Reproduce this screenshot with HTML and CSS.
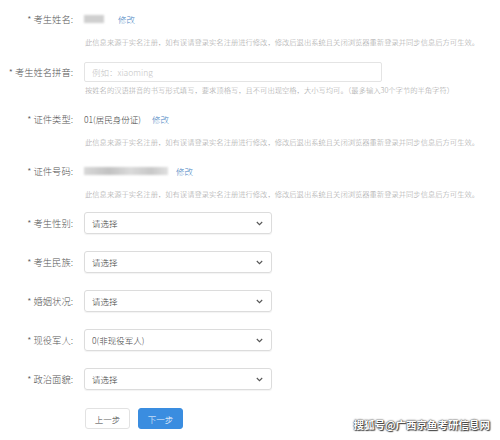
FILE: index.html
```html
<!DOCTYPE html>
<html lang="zh-CN">
<head>
<meta charset="utf-8">
<title>考生信息</title>
<link rel="stylesheet" href="styles.css">
</head>
<body>
<div class="page">
  <form class="form">
    <div class="row r1">
      <div class="label">* 考生姓名:</div>
      <div class="field"><span class="blur blur-name"></span><a class="link">修改</a></div>
    </div>
    <div class="help h1">此信息来源于实名注册，如有误请登录实名注册进行修改，修改后退出系统且关闭浏览器重新登录并同步信息后方可生效。</div>

    <div class="row r2">
      <div class="label">* 考生姓名拼音:</div>
      <div class="field"><div class="input">例如：xiaoming</div></div>
    </div>
    <div class="help h2">按姓名的汉语拼音的书写形式填写，要求顶格写，且不可出现空格，大小写均可。（最多输入30个字节的半角字符）</div>

    <div class="row r3">
      <div class="label">* 证件类型:</div>
      <div class="field"><span class="value">01(居民身份证)</span><a class="link">修改</a></div>
    </div>
    <div class="help h1">此信息来源于实名注册，如有误请登录实名注册进行修改，修改后退出系统且关闭浏览器重新登录并同步信息后方可生效。</div>

    <div class="row r3">
      <div class="label">* 证件号码:</div>
      <div class="field"><span class="blur blur-id"></span><a class="link">修改</a></div>
    </div>
    <div class="help h1">此信息来源于实名注册，如有误请登录实名注册进行修改，修改后退出系统且关闭浏览器重新登录并同步信息后方可生效。</div>

    <div class="row sel first">
      <div class="label">* 考生性别:</div>
      <div class="field"><div class="select"><span>请选择</span><svg width="7" height="5" viewBox="0 0 7 5"><path d="M0.8 1 L3.5 3.7 L6.2 1" fill="none" stroke="#555" stroke-width="1.1"/></svg></div></div>
    </div>
    <div class="row sel">
      <div class="label">* 考生民族:</div>
      <div class="field"><div class="select"><span>请选择</span><svg width="7" height="5" viewBox="0 0 7 5"><path d="M0.8 1 L3.5 3.7 L6.2 1" fill="none" stroke="#555" stroke-width="1.1"/></svg></div></div>
    </div>
    <div class="row sel">
      <div class="label">* 婚姻状况:</div>
      <div class="field"><div class="select"><span>请选择</span><svg width="7" height="5" viewBox="0 0 7 5"><path d="M0.8 1 L3.5 3.7 L6.2 1" fill="none" stroke="#555" stroke-width="1.1"/></svg></div></div>
    </div>
    <div class="row sel">
      <div class="label">* 现役军人:</div>
      <div class="field"><div class="select"><span>0(非现役军人)</span><svg width="7" height="5" viewBox="0 0 7 5"><path d="M0.8 1 L3.5 3.7 L6.2 1" fill="none" stroke="#555" stroke-width="1.1"/></svg></div></div>
    </div>
    <div class="row sel">
      <div class="label">* 政治面貌:</div>
      <div class="field"><div class="select"><span>请选择</span><svg width="7" height="5" viewBox="0 0 7 5"><path d="M0.8 1 L3.5 3.7 L6.2 1" fill="none" stroke="#555" stroke-width="1.1"/></svg></div></div>
    </div>

    <div class="row actions">
      <div class="label"></div>
      <div class="field buttons">
        <button type="button" class="btn btn-default">上一步</button>
        <button type="button" class="btn btn-primary">下一步</button>
      </div>
    </div>
  </form>
  <div class="watermark">搜狐号@广西京鱼考研信息网</div>
</div>
</body>
</html>
```

FILE: styles.css
```css
html, body {
  margin: 0;
  padding: 0;
  background: #ffffff;
}

body {
  font-family: "Noto Sans CJK SC", "Noto Sans", "Liberation Sans", sans-serif;
  color: #555;
}

.page {
  position: relative;
  width: 500px;
  height: 440px;
  overflow: hidden;
}

.form {
  padding-top: 9px;
}

.row {
  display: grid;
  grid-template-columns: 84px 1fr;
  align-items: center;
}

.label {
  text-align: right;
  padding-right: 11px;
  font-size: 9.3px;
  font-weight: 300;
  color: #555;
  white-space: nowrap;
}

.field {
  display: flex;
  align-items: center;
  font-size: 8.5px;
  font-weight: 300;
  color: #444;
}

.r1, .r3 {
  height: 20px;
}

.r2 {
  height: 20px;
  margin-top: 14px;
}

.r3 {
  margin-top: 13px;
}

.help {
  margin-left: 85px;
  font-size: 7.3px;
  font-weight: 300;
  line-height: 12px;
  color: #a3a3a3;
  white-space: nowrap;
}

.help.h1 {
  margin-top: 7px;
}

.help.h2 {
  margin-top: 2px;
}

.link {
  color: #3f7fbf;
  text-decoration: none;
  font-size: 8.5px;
}

.blur {
  display: inline-block;
  height: 8px;
  background: #cfcfcf;
  filter: blur(1.2px);
}

.blur-name {
  width: 20px;
  margin-right: 14px;
}

.blur-id {
  width: 84px;
  margin-right: 8px;
  background: linear-gradient(90deg, #d8d8d8 0%, #c2c2c2 30%, #dadada 55%, #c8c8c8 80%, #e0e0e0 100%);
}

.value {
  margin-right: 11px;
}

.input {
  box-sizing: border-box;
  width: 298px;
  height: 20px;
  border: 1px solid #e4e4e4;
  border-radius: 2px;
  padding-left: 7px;
  display: flex;
  align-items: center;
  font-size: 8.5px;
  color: #c4c4c4;
}

.row.sel {
  height: 22px;
  margin-top: 17px;
}

.row.sel.first {
  margin-top: 12px;
}

.select {
  box-sizing: border-box;
  width: 188px;
  height: 22px;
  border: 1px solid #dcdcdc;
  border-radius: 3px;
  box-shadow: 0 1px 1px rgba(0, 0, 0, 0.05);
  display: flex;
  align-items: center;
  justify-content: space-between;
  padding: 0 8px 0 7px;
  font-size: 8.5px;
  color: #444;
}

.select svg {
  display: block;
}

.row.actions {
  margin-top: 18px;
}

.buttons {
  gap: 8px;
  padding-left: 1px;
}

.btn {
  box-sizing: border-box;
  width: 45px;
  height: 21px;
  border-radius: 3px;
  font-family: inherit;
  font-size: 8.5px;
  font-weight: 300;
  padding: 0;
  cursor: pointer;
}

.btn-default {
  background: #ffffff;
  border: 1px solid #e2e2e2;
  color: #444;
}

.btn-primary {
  background: #3a8de0;
  border: 1px solid #3a8de0;
  color: #ffffff;
}

.watermark {
  position: absolute;
  right: 10px;
  bottom: 8px;
  font-size: 10.5px;
  font-weight: bold;
  color: #ffffff;
  text-shadow: 0 0 1px #333, 0 0 2px #333, 1px 1px 1px #444;
}
```
